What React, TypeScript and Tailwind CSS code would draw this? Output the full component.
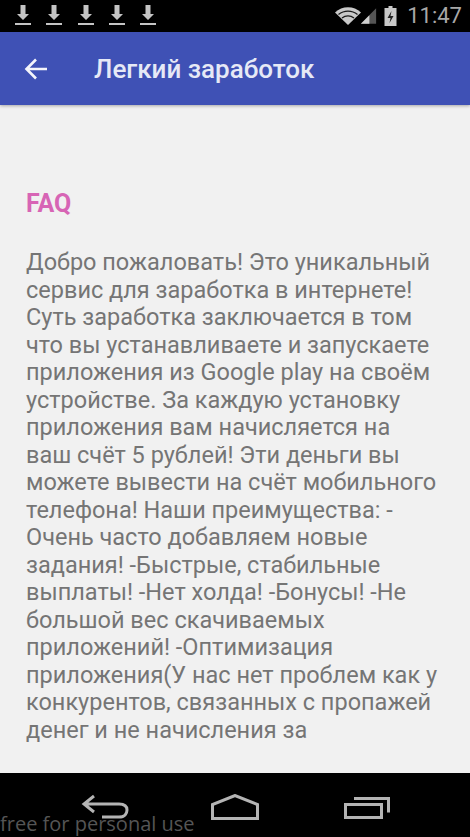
import * as React from "react";

const lines = [
  "Добро пожаловать! Это уникальный",
  "сервис для заработка в интернете!",
  "Суть заработка заключается в том",
  "что вы устанавливаете и запускаете",
  "приложения из Google play на своём",
  "устройстве. За каждую установку",
  "приложения вам начисляется на",
  "ваш счёт 5 рублей! Эти деньги вы",
  "можете вывести на счёт мобильного",
  "телефона! Наши преимущества: -",
  "Очень часто добавляем новые",
  "задания! -Быстрые, стабильные",
  "выплаты! -Нет холда! -Бонусы! -Не",
  "большой вес скачиваемых",
  "приложений! -Оптимизация",
  "приложения(У нас нет проблем как у",
  "конкурентов, связанных с пропажей",
  "денег и не начисления за",
];

function DownloadIcon() {
  return (
    <svg width="16" height="20" viewBox="0 0 16 20" className="text-[#c4c4c4]">
      <path d="M5.5 0h5v9h3.5L8 15 2 9h3.5z" fill="currentColor" />
      <rect x="0" y="18" width="16" height="2" fill="currentColor" />
    </svg>
  );
}

function StatusIcons() {
  return (
    <div className="flex items-center">
      <svg width="26" height="18" viewBox="0 0 26 18" className="mr-[-1px]">
        <path d="M0 5.5C7 -1.5 19 -1.5 26 5.5L13 18z" fill="#c9c9c9" />
        <path d="M3.5 7.5C9 3 17 3 22.5 7.5" stroke="#1a1a1a" strokeWidth="1.3" fill="none" />
        <path d="M7 11C10.5 8.2 15.5 8.2 19 11" stroke="#1a1a1a" strokeWidth="1.3" fill="none" />
      </svg>
      <svg width="17" height="20" viewBox="0 0 20 20">
        <path d="M1 19 19 1v18z" fill="#555555" />
        <path d="M1 19 11 9v10z" fill="#d0d0d0" />
      </svg>
      <svg width="13" height="20" viewBox="0 0 12 20" className="ml-[7px]">
        <path d="M4 0h4v2h4v18H0V2h4z" fill="#c9c9c9" />
        <path d="M7 5 3 12h3l-1 5 4-7H6z" fill="#222222" />
      </svg>
    </div>
  );
}

export default function App() {
  return (
    <div className="relative flex h-[837px] w-[470px] flex-col overflow-hidden bg-[#f1f1f1] font-['Roboto',sans-serif]">
      <div className="flex h-8 shrink-0 items-start justify-between bg-black pl-[15px] pr-2">
        <div className="flex gap-[15.3px] pt-[5px]">
          <DownloadIcon />
          <DownloadIcon />
          <DownloadIcon />
          <DownloadIcon />
          <DownloadIcon />
        </div>
        <div className="flex h-8 items-center gap-[10px]">
          <StatusIcons />
          <span className="text-[22px] leading-none text-[#a8a8a8]">11:47</span>
        </div>
      </div>

      <div className="flex h-[73px] shrink-0 items-center bg-[#3f51b5] pl-[24px] shadow-[0_1px_3px_rgba(0,0,0,0.3)]">
        <svg width="24" height="24" viewBox="0 0 24 24" fill="none" stroke="#f4f5fb" strokeWidth="2.6">
          <path d="M23 12H2M12 2.5 2.5 12l9.5 9.5" />
        </svg>
        <span className="ml-[46px] pt-[2px] text-[26px] font-medium text-[#e6e9f6]">Легкий заработок</span>
      </div>

      <div className="flex-1 overflow-hidden pl-[26px] pt-[85px]">
        <div className="text-[25px] font-bold leading-7 text-[#d765b5]">FAQ</div>
        <div className="mt-[31px] whitespace-nowrap text-[23.5px] leading-[27.5px] text-[#757575]">
          {lines.map((line) => (
            <div key={line}>{line}</div>
          ))}
        </div>
      </div>

      <div className="relative flex h-[64px] shrink-0 items-start bg-black">
        <svg width="48" height="28" viewBox="0 0 48 28" fill="none" stroke="#b4b4b4" strokeWidth="3" className="absolute left-[81px] top-[21px]">
          <path d="M13 2 3 10l10 8M3 10h35c6 0 8 3 8 6s-2 7-8 7H21" />
        </svg>
        <svg width="48" height="26" viewBox="0 0 48 26" fill="none" stroke="#b4b4b4" strokeWidth="3" className="absolute left-[211px] top-[21px]">
          <path d="M1.5 24.5V10.5L24 1.5l22.5 9v14z" />
        </svg>
        <svg width="46" height="24" viewBox="0 0 46 24" fill="none" stroke="#b4b4b4" strokeWidth="3" className="absolute left-[344px] top-[22px]">
          <path d="M1.5 9.5h36v13h-36zM10 3.5h34.5v14" />
        </svg>
        <span className="absolute bottom-0 left-0 text-[20px] leading-[26px] text-[#555555] font-['Open_Sans',sans-serif]">free for personal use</span>
      </div>
    </div>
  );
}
